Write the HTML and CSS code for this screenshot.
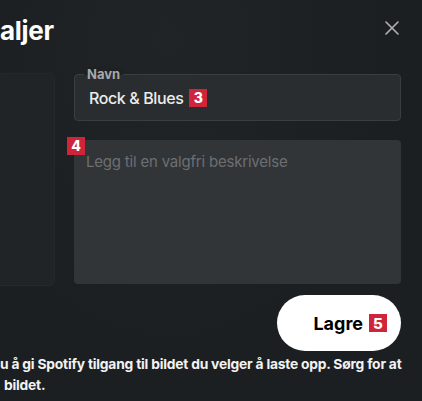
FILE: index.html
```html
<!DOCTYPE html>
<html lang="no">
<head>
<meta charset="utf-8">
<title>Rediger detaljer</title>
<link rel="stylesheet" href="styles.css">
</head>
<body>
<div class="modal">
  <header class="header">
    <h1 class="title">aljer</h1>
    <button class="close" aria-label="Lukk">
      <svg width="14" height="14" viewBox="0 0 14 14"><path d="M1 1 L13 13 M13 1 L1 13" stroke="#b3b3b3" stroke-width="1.6" fill="none" stroke-linecap="round"/></svg>
    </button>
  </header>
  <div class="body">
    <div class="image"></div>
    <div class="fields">
      <div class="name">
        <span class="label">Navn</span>
        <span class="value">Rock &amp; Blues</span>
        <span class="badge">3</span>
      </div>
      <div class="desc">
        <span class="badge badge-4">4</span>
        <span class="placeholder">Legg til en valgfri beskrivelse</span>
      </div>
    </div>
  </div>
  <div class="actions">
    <button class="save"><span>Lagre</span><span class="badge">5</span></button>
  </div>
  <p class="legal"><span class="l1">u å gi Spotify tilgang til bildet du velger å laste opp. Sørg for at</span><span class="l2">bildet.</span></p>
</div>
</body>
</html>
```
FILE: styles.css
```css
html, body {
  margin: 0;
  padding: 0;
  background: #1c1f22;
  overflow: hidden;
}
body {
  width: 422px;
  height: 401px;
  font-family: Inter, "Noto Sans", "Liberation Sans", sans-serif;
  color: #fff;
}
.modal {
  display: flex;
  flex-direction: column;
  height: 401px;
  background: radial-gradient(ellipse at 40% 10%, #212427 0%, #1c1f22 60%);
}
.header {
  display: flex;
  align-items: center;
  justify-content: space-between;
  height: 56px;
  padding: 0 23px 0 0;
}
.title {
  margin: 0;
  font-size: 26px;
  font-weight: 700;
  letter-spacing: -0.3px;
  line-height: 30px;
  padding-top: 5px;
}
.close {
  background: none;
  border: 0;
  padding: 0;
  width: 14px;
  height: 14px;
  display: flex;
  margin-bottom: 1px;
}
.body {
  display: flex;
  gap: 20px;
  margin-top: 18px;
  padding-right: 21px;
}
.image {
  width: 54px;
  height: 211px;
  background: #212427;
  border-radius: 0 5px 5px 0;
  box-shadow: 0 0 0 1px #25282b;
}
.fields {
  flex: 1;
  display: flex;
  flex-direction: column;
  gap: 19px;
}
.name {
  position: relative;
  height: 45px;
  border: 1px solid #3b3e41;
  border-radius: 4px;
  background: #2a2d30;
  display: flex;
  align-items: center;
  padding: 0 12px 0 14px;
  gap: 6px;
}
.label {
  position: absolute;
  left: 9px;
  top: -8px;
  padding: 0 3px;
  font-size: 13px;
  font-weight: 700;
  line-height: 14px;
  color: #a7a9ab;
  background: linear-gradient(to bottom, #1e2124 55%, #2a2d30 55%);
}
.value {
  font-size: 16px;
  font-weight: 500;
  color: #ececec;
  letter-spacing: -0.4px;
  padding-top: 1px;
}
.badge {
  display: inline-flex;
  align-items: center;
  justify-content: center;
  width: 18px;
  height: 18px;
  background: #d0243a;
  color: #fff;
  font-size: 14px;
  font-weight: 800;
  line-height: 1;
}
.desc {
  position: relative;
  height: 144px;
  background: #323538;
  border-radius: 4px;
  padding: 11px 12px;
  box-sizing: border-box;
}
.badge-4 {
  position: absolute;
  left: -7px;
  top: -3px;
}
.placeholder {
  font-size: 15px;
  color: #6c6f72;
  letter-spacing: -0.2px;
}
.actions {
  display: flex;
  justify-content: flex-end;
  padding: 10px 21px 0 0;
}
.save {
  width: 124px;
  height: 56px;
  border: 0;
  border-radius: 28px;
  background: #fff;
  color: #000;
  font-family: inherit;
  font-size: 18px;
  font-weight: 700;
  display: flex;
  align-items: center;
  justify-content: flex-end;
  gap: 6px;
  padding: 0 14px 0 0;
}
.save .badge {
  font-size: 15px;
}
.legal {
  margin: 3px 0 0 0;
  font-size: 13.8px;
  font-weight: 700;
  line-height: 21px;
  color: #f2f2f2;
  letter-spacing: -0.2px;
  display: flex;
  flex-direction: column;
  white-space: nowrap;
}
.l2 {
  padding-left: 4px;
}
```
